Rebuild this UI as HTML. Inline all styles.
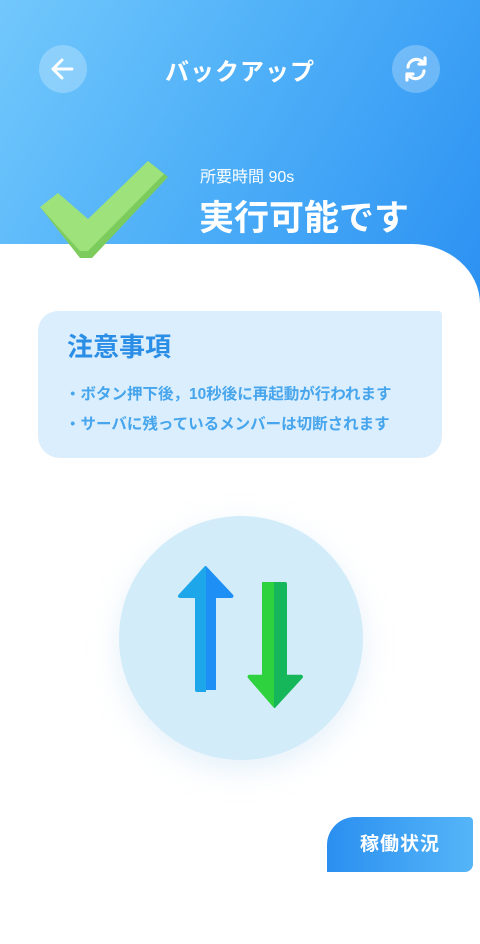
<!DOCTYPE html>
<html><head><meta charset="utf-8"><style>
*{margin:0;padding:0;box-sizing:border-box}
body{width:480px;height:879px;overflow:hidden;background:#fff;font-family:"Liberation Sans","Noto Sans CJK JP",sans-serif;position:relative}
.hdr{position:absolute;left:0;top:0;width:480px;height:320px;background:linear-gradient(120deg,#72c8fc 0%,#4fb0f8 45%,#2a90f2 100%)}
.white{position:absolute;left:0;top:244px;width:480px;height:700px;background:#fff;border-top-right-radius:68px 60px}
.cb{position:absolute;top:45px;width:48px;height:48px;border-radius:50%;background:rgba(255,255,255,.25)}
.t{position:absolute;color:#fff;white-space:nowrap}
.card{position:absolute;left:38px;top:311px;width:404px;height:147px;background:#dbeefd;border-radius:20px 4px 22px 22px}
.btn{position:absolute;left:327px;top:817px;width:146px;height:55px;background:linear-gradient(90deg,#2a8ff0,#55b5f8);border-radius:28px 4px 8px 0;color:#fff;font-size:19px;font-weight:bold;text-align:center;line-height:55px;letter-spacing:1px}
</style></head><body>
<div class="hdr"></div>
<div class="white"></div>
<div class="cb" style="left:39px"><svg width="48" height="48" viewBox="0 0 48 48"><path d="M33 24H15M23 15l-9 9 9 9" stroke="#fff" stroke-width="3" fill="none" stroke-linecap="round" stroke-linejoin="round"/></svg></div>
<div class="cb" style="left:392px"><svg width="48" height="48" viewBox="0 0 48 48"><path d="M16 22a8.5 8.5 0 0 1 15-4.5M32 26a8.5 8.5 0 0 1-15 4.5" stroke="#fff" stroke-width="3.2" fill="none" stroke-linecap="round"/><path d="M33 13v6h-6M15 35v-6h6" stroke="#fff" stroke-width="3.2" fill="none" stroke-linecap="round" stroke-linejoin="round"/></svg></div>
<div class="t" style="left:0;width:480px;text-align:center;top:52px;font-size:24px;font-weight:bold;letter-spacing:1px">バックアップ</div>
<svg style="position:absolute;left:30px;top:155px" width="145" height="110" viewBox="0 0 145 110">
<polygon points="10,52 26,42 58,68 58,103 50,103" fill="#7fcc5e"/>
<polygon points="58,68 122,9 138,22 62,103 58,103" fill="#7ccb5d"/>
<polygon points="10,52 28,38 58,64 118,6 134,19 58,96 50,96" fill="#9ee27b"/>
</svg>
<div class="t" style="left:200px;top:163px;font-size:16px">所要時間 90s</div>
<div class="t" style="left:199px;top:190px;font-size:35px;font-weight:bold">実行可能です</div>
<div class="card"></div>
<div class="t" style="left:67px;top:327px;font-size:26px;font-weight:bold;color:#2b8ee6">注意事項</div>
<div class="t" style="left:65px;top:382px;font-size:15.5px;font-weight:bold;color:#46a5ec">・ボタン押下後，10秒後に再起動が行われます</div>
<div class="t" style="left:65px;top:412px;font-size:15.5px;font-weight:bold;color:#46a5ec">・サーバに残っているメンバーは切断されます</div>
<div style="position:absolute;left:119px;top:516px;width:244px;height:244px;border-radius:50%;background:#d3ecf9;box-shadow:0 10px 30px rgba(180,215,240,.35)"></div>
<svg style="position:absolute;left:170px;top:560px" width="140" height="155" viewBox="0 0 140 155">
<path d="M25 130V38H10a2 2 0 0 1-1.5-3.3L35 6l1 0v124z" fill="#1ea6ea"/>
<path d="M36 6l27 28.7a2 2 0 0 1-1.5 3.3H46v92H36z" fill="#1e8ff5"/>
<path d="M25 130h11v2H27a2 2 0 0 1-2-2z" fill="#1ea6ea"/>
<path d="M92 22h12v126L78 118a2 2 0 0 1 1.5-3.3H92z" fill="#2ed23e"/>
<path d="M104 22h11a2 2 0 0 1 2 2v90.7h14a2 2 0 0 1 1.5 3.3L105 148h-1z" fill="#16b75a"/>
</svg>
<div class="btn">稼働状況</div>
</body></html>
